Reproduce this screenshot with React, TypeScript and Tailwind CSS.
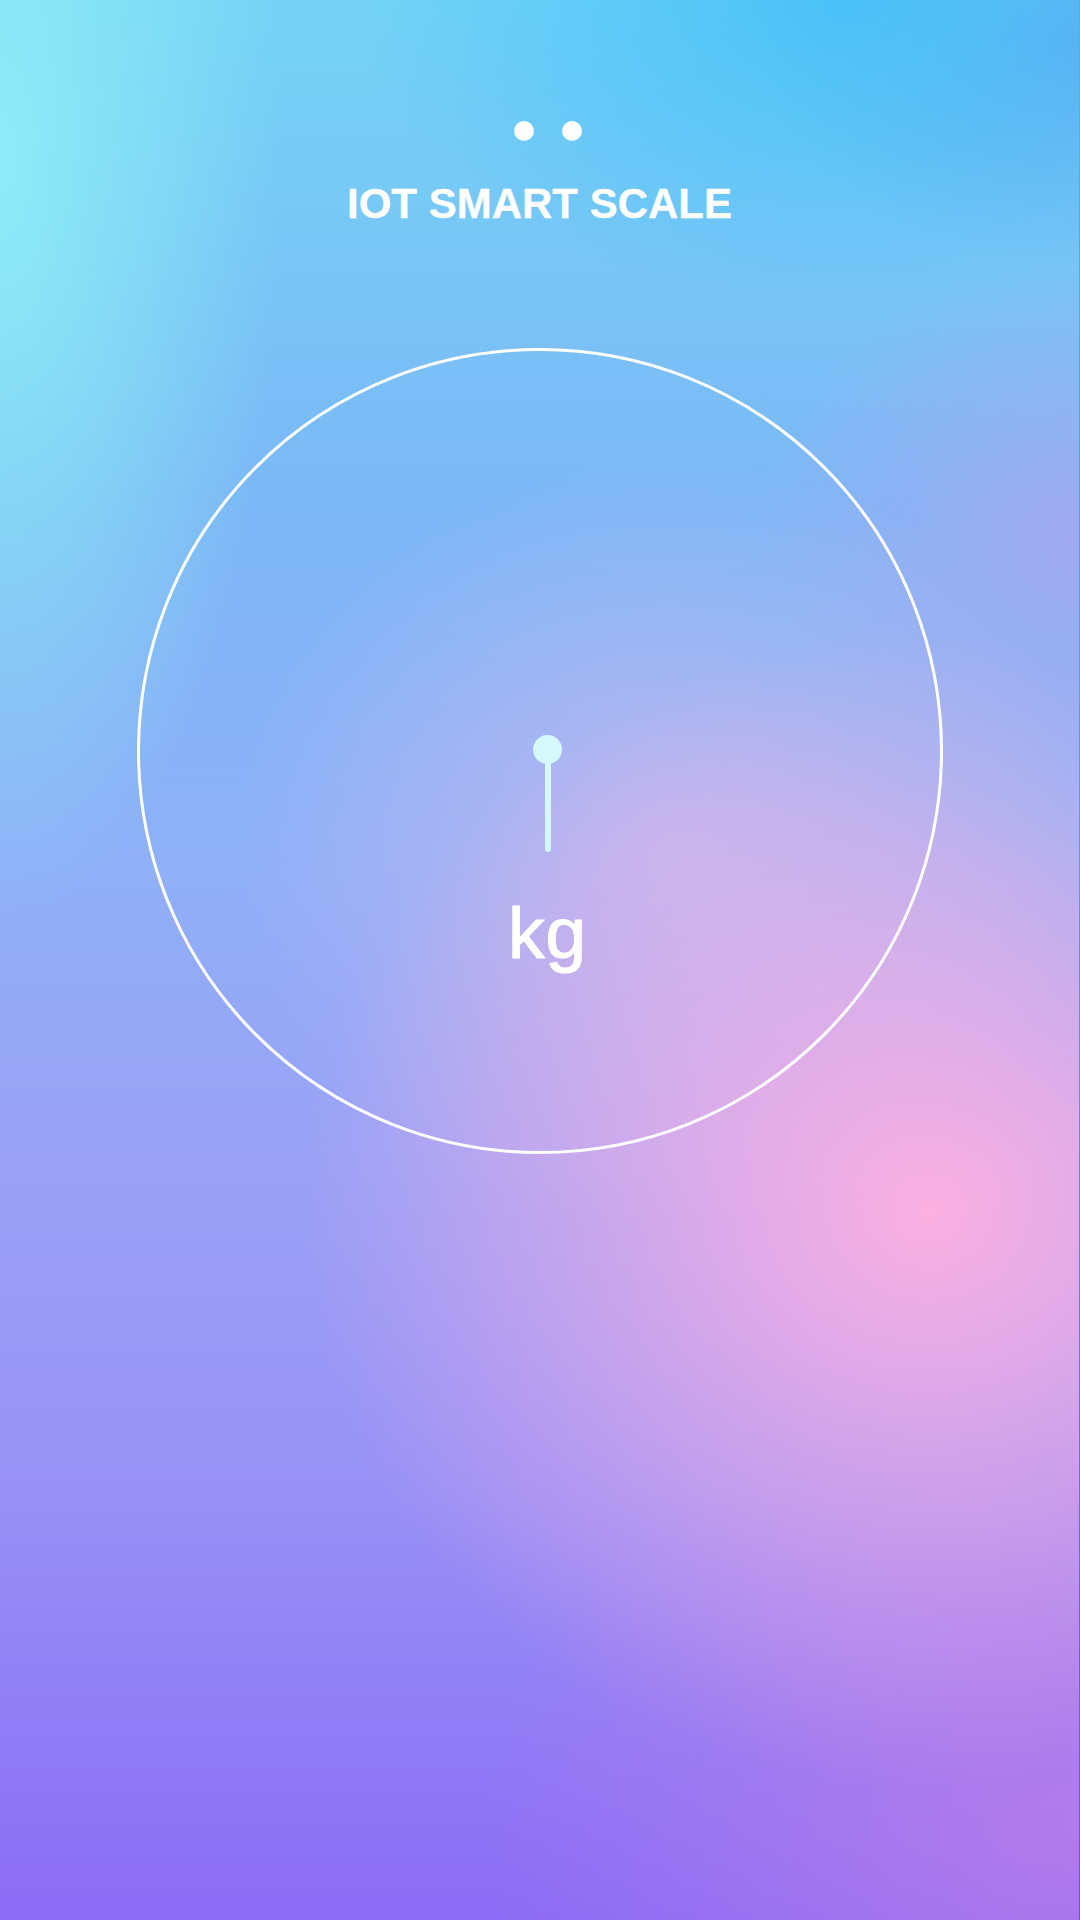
import React from 'react';

const bg =
   'bg-[radial-gradient(ellipse_58%_30%_at_86%_63%,rgba(252,176,226,1),rgba(252,176,226,0)),radial-gradient(ellipse_40%_20%_at_62%_44%,rgba(206,184,238,0.7),rgba(206,184,238,0)),radial-gradient(ellipse_30%_14%_at_100%_28%,rgba(176,164,238,0.7),rgba(176,164,238,0)),radial-gradient(ellipse_26%_40%_at_0%_8%,rgba(142,236,246,1),rgba(142,236,246,0)),radial-gradient(ellipse_45%_16%_at_78%_0%,rgba(70,192,248,0.9),rgba(70,192,248,0)),radial-gradient(ellipse_30%_12%_at_100%_2%,rgba(96,160,240,0.8),rgba(96,160,240,0)),radial-gradient(ellipse_55%_22%_at_100%_95%,rgba(188,124,232,0.8),rgba(188,124,232,0)),linear-gradient(180deg,#74d4f6_0%,#7cb8f6_26%,#8fb0f7_45%,#9aa2f6_60%,#9890f6_78%,#8a6cf5_100%)]';

function Needle() {
   return (
      <div className="ml-4 flex flex-col items-center">
         <div className="h-[29px] w-[29px] rounded-full bg-[#d4f8fc]" />
         <div className="-mt-2 h-[96px] w-[6px] rounded-full bg-[#d4f8fc]" />
      </div>
   );
}

export default function App() {
   return (
      <div className={`flex h-[1920px] w-full overflow-hidden ${bg}`}>
         <main
            className="flex flex-1 flex-col items-center"
            style={{ fontFamily: '"Liberation Sans", Arial, sans-serif' }}
         >
            {/* status dots */}
            <div className="ml-4 mt-[121px] flex gap-[28px]">
               <span className="h-5 w-5 rounded-full bg-white" />
               <span className="h-5 w-5 rounded-full bg-white" />
            </div>

            <h1 className="mt-[42px] text-[42px] font-bold leading-none text-white [-webkit-text-stroke:0.3px_white]">
               IOT SMART SCALE
            </h1>

            <section className="mt-[123px] flex h-[806px] w-[806px] flex-col items-center rounded-full border-[3px] border-white pt-[384px]">
               <Needle />
               <p className="ml-4 mt-[44px] text-[73px] leading-none tracking-[1px] text-white [-webkit-text-stroke:1.2px_white]">
                  kg
               </p>
            </section>
         </main>
         <div className="w-px bg-[linear-gradient(180deg,#2cc6d8,#6a8ee8_50%,#7a48e0)]" />
      </div>
   );
}
